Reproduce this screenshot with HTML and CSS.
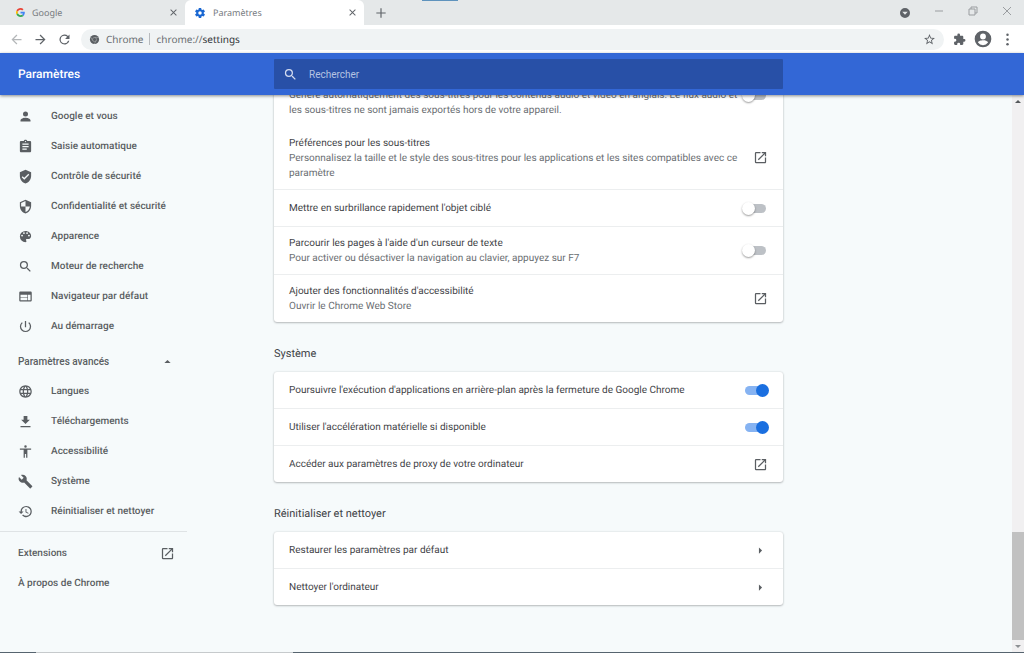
FILE: index.html
```html
<!DOCTYPE html>
<html lang="fr">
<head>
<meta charset="utf-8">
<title>Paramètres</title>
<link rel="stylesheet" href="styles.css">
</head>
<body>
<svg class="sprite" aria-hidden="true">
  <symbol id="i-open" viewBox="0 0 24 24"><path d="M19 19H5V5h7V3H5a2 2 0 0 0-2 2v14a2 2 0 0 0 2 2h14c1.1 0 2-.9 2-2v-7h-2v7zM14 3v2h3.590l-9.830 9.830 1.410 1.410L19 6.410V10h2V3h-7z"/></symbol>
  <symbol id="i-search" viewBox="0 0 24 24"><path d="M15.500 14h-.79l-.28-.27A6.470 6.470 0 0 0 16 9.500 6.500 6.500 0 1 0 9.500 16c1.610 0 3.090-.59 4.230-1.570l.27.28v.79l5 4.990L20.490 19l-4.990-5zm-6 0C7.010 14 5 11.990 5 9.500S7.010 5 9.500 5 14 7.010 14 9.500 11.990 14 9.500 14z"/></symbol>
  <symbol id="i-close" viewBox="0 0 24 24"><path d="M19 6.400L17.600 5 12 10.600 6.400 5 5 6.400 10.600 12 5 17.600 6.400 19 12 13.400 17.600 19 19 17.600 13.400 12z"/></symbol>
  <symbol id="i-back" viewBox="0 0 24 24"><path d="M20 11H7.830l5.590-5.590L12 4l-8 8 8 8 1.410-1.410L7.830 13H20v-2z"/></symbol>
  <symbol id="i-right" viewBox="0 0 24 24"><path d="M9.500 7l5 5-5 5z"/></symbol>
</svg>

<header class="tabs">
  <div class="tab">
    <svg class="favicon" viewBox="0 0 48 48"><path fill="#ea4335" d="M24 9.500c3.540 0 6.710 1.220 9.210 3.600l6.850-6.850C35.900 2.380 30.470 0 24 0 14.620 0 6.510 5.380 2.560 13.220l7.980 6.190C12.430 13.720 17.740 9.500 24 9.500z"/><path fill="#4285f4" d="M46.980 24.550c0-1.570-.15-3.090-.38-4.550H24v9.020h12.940c-.58 2.960-2.260 5.480-4.780 7.180l7.730 6c4.510-4.180 7.090-10.360 7.090-17.650z"/><path fill="#fbbc05" d="M10.530 28.590a14.500 14.500 0 0 1 0-9.180l-7.980-6.190a24 24 0 0 0 0 21.560l7.980-6.190z"/><path fill="#34a853" d="M24 48c6.480 0 11.930-2.130 15.890-5.810l-7.730-6c-2.150 1.450-4.920 2.300-8.160 2.300-6.260 0-11.570-4.220-13.470-9.910l-7.980 6.190C6.510 42.620 14.620 48 24 48z"/></svg>
    <span class="tab-name">Google</span>
    <button class="ico" aria-label="Fermer l'onglet Google"><svg><use href="#i-close"/></svg></button>
  </div>
  <div class="tab active">
    <svg class="gear" viewBox="0 0 24 24"><path d="M19.430 12.980c.04-.32.07-.64.07-.98s-.03-.66-.07-.98l2.110-1.650c.19-.15.24-.42.12-.64l-2-3.460c-.12-.22-.39-.3-.61-.22l-2.490 1c-.52-.4-1.080-.73-1.690-.98l-.38-2.650A.49.49 0 0 0 14 2h-4c-.25 0-.46.18-.49.42l-.38 2.650c-.61.25-1.170.59-1.690.98l-2.490-1c-.23-.09-.49 0-.61.22l-2 3.460c-.13.22-.07.49.12.64l2.110 1.650c-.04.32-.07.65-.07.98s.03.66.07.98l-2.110 1.650c-.19.15-.24.42-.12.64l2 3.460c.12.22.39.3.61.22l2.490-1c.52.4 1.080.73 1.690.98l.38 2.650c.03.24.24.42.49.42h4c.25 0 .46-.18.49-.42l.38-2.650c.61-.25 1.170-.59 1.690-.98l2.490 1c.23.09.49 0 .61-.22l2-3.460c.12-.22.07-.49-.12-.64l-2.110-1.650zM12 15.500a3.500 3.500 0 1 1 0-7 3.500 3.500 0 0 1 0 7z"/></svg>
    <span class="tab-name">Paramètres</span>
    <button class="ico" aria-label="Fermer l'onglet Paramètres"><svg><use href="#i-close"/></svg></button>
  </div>
  <button class="ico new-tab" aria-label="Nouvel onglet"><svg viewBox="0 0 24 24"><path d="M20 13h-7v7h-2v-7H4v-2h7V4h2v7h7z"/></svg></button>
  <div class="window-buttons">
    <button class="ico" aria-label="Rechercher des onglets"><svg viewBox="0 0 24 24"><path fill-rule="evenodd" d="M12 2a10 10 0 1 0 0 20 10 10 0 0 0 0-20zM6.500 9.500h11L12 15.500z"/></svg></button>
    <button class="ico thin" aria-label="Réduire"><svg viewBox="0 0 12 12"><path d="M2 6h8"/></svg></button>
    <button class="ico thin" aria-label="Restaurer"><svg viewBox="0 0 12 12"><path d="M2 4h6v6H2zM4 4V2h6v6H8"/></svg></button>
    <button class="ico thin" aria-label="Fermer"><svg viewBox="0 0 12 12"><path d="M2 2l8 8M10 2l-8 8"/></svg></button>
  </div>
</header>

<div class="toolbar">
  <button class="ico dim" aria-label="Retour"><svg><use href="#i-back"/></svg></button>
  <button class="ico forward" aria-label="Avancer"><svg><use href="#i-back"/></svg></button>
  <button class="ico" aria-label="Actualiser"><svg viewBox="0 0 24 24"><path d="M17.650 6.350A8 8 0 1 0 19.730 14h-2.080A6 6 0 1 1 12 6c1.660 0 3.140.69 4.220 1.780L13 11h7V4l-2.350 2.350z"/></svg></button>
  <div class="omnibox">
    <svg class="chrome-logo" viewBox="0 0 24 24"><circle cx="12" cy="12" r="10"/><circle class="ring" cx="12" cy="12" r="4.500"/><path class="ring" d="M12 7.500h9M8 14.200L3.600 6.600M16 14.200l-4.500 7.700"/></svg>
    <span>Chrome</span>
    <span class="divider"></span>
    <span class="url">chrome://<b>settings</b></span>
    <button class="ico" aria-label="Ajouter aux favoris"><svg viewBox="0 0 24 24"><path d="M22 9.240l-7.190-.62L12 2 9.190 8.630 2 9.240l5.460 4.730L5.820 21 12 17.270 18.180 21l-1.630-7.030L22 9.240zM12 15.400l-3.760 2.270 1-4.280-3.320-2.880 4.380-.38L12 6.100l1.710 4.040 4.380.38-3.320 2.880 1 4.280L12 15.400z"/></svg></button>
  </div>
  <div class="actions">
    <button class="ico puzzle" aria-label="Extensions"><svg viewBox="0 0 24 24"><path d="M20.500 11H19V7c0-1.100-.9-2-2-2h-4V3.500a2.500 2.500 0 0 0-5 0V5H4c-1.100 0-2 .9-2 2v3.800h1.500a2.700 2.700 0 0 1 0 5.400H2V20c0 1.100.9 2 2 2h3.800v-1.500a2.700 2.700 0 0 1 5.400 0V22H17c1.100 0 2-.9 2-2v-4h1.500a2.500 2.500 0 0 0 0-5z"/></svg></button>
    <button class="ico profile" aria-label="Profil"><svg viewBox="0 0 24 24"><path d="M12 2a10 10 0 1 0 0 20 10 10 0 0 0 0-20zm0 3.500a3.500 3.500 0 1 1 0 7 3.500 3.500 0 0 1 0-7zm0 14a7.500 7.500 0 0 1-6-3.200c0-1.800 4-2.800 6-2.800s6 1 6 2.800a7.500 7.500 0 0 1-6 3.200z"/></svg></button>
    <button class="ico" aria-label="Menu"><svg viewBox="0 0 24 24"><circle cx="12" cy="4.500" r="2"/><circle cx="12" cy="12" r="2"/><circle cx="12" cy="19.500" r="2"/></svg></button>
  </div>
</div>

<div class="app-bar">
  <h1>Paramètres</h1>
  <label class="search"><svg><use href="#i-search"/></svg><input type="search" placeholder="Rechercher" aria-label="Rechercher"></label>
</div>

<div class="page">
  <nav class="side">
    <a href="#"><svg viewBox="0 0 24 24"><path d="M12 12a4 4 0 1 0 0-8 4 4 0 0 0 0 8zm0 2c-2.670 0-8 1.340-8 4v2h16v-2c0-2.660-5.330-4-8-4z"/></svg>Google et vous</a>
    <a href="#"><svg viewBox="0 0 24 24"><path d="M19 3h-4.180C14.400 1.840 13.300 1 12 1s-2.400.84-2.820 2H5c-1.100 0-2 .9-2 2v14c0 1.100.9 2 2 2h14c1.100 0 2-.9 2-2V5c0-1.100-.9-2-2-2zm-7 0c.55 0 1 .45 1 1s-.45 1-1 1-1-.45-1-1 .45-1 1-1zm2 14H7v-2h7v2zm3-4H7v-2h10v2zm0-4H7V7h10v2z"/></svg>Saisie automatique</a>
    <a href="#"><svg viewBox="0 0 24 24"><path d="M12 1L3 5v6c0 5.550 3.840 10.740 9 12 5.160-1.260 9-6.450 9-12V5l-9-4zm-2 16l-4-4 1.410-1.410L10 14.170l6.590-6.590L18 9l-8 8z"/></svg>Contrôle de sécurité</a>
    <a href="#"><svg viewBox="0 0 24 24"><path d="M12 1L3 5v6c0 5.550 3.840 10.740 9 12 5.160-1.260 9-6.450 9-12V5l-9-4zm0 10.990h7c-.53 4.120-3.280 7.790-7 8.940V12H5V6.300l7-3.110v8.800z"/></svg>Confidentialité et sécurité</a>
    <a href="#"><svg viewBox="0 0 24 24"><path d="M12 3a9 9 0 0 0 0 18c.83 0 1.500-.67 1.500-1.500 0-.39-.15-.74-.39-1.010-.23-.26-.38-.61-.38-.99 0-.83.67-1.500 1.500-1.500H16c2.760 0 5-2.240 5-5 0-4.420-4.030-8-9-8zm-5.500 9a1.500 1.500 0 1 1 0-3 1.500 1.500 0 0 1 0 3zm3-4a1.500 1.500 0 1 1 0-3 1.500 1.500 0 0 1 0 3zm5 0a1.500 1.500 0 1 1 0-3 1.500 1.500 0 0 1 0 3zm3 4a1.500 1.500 0 1 1 0-3 1.500 1.500 0 0 1 0 3z"/></svg>Apparence</a>
    <a href="#"><svg><use href="#i-search"/></svg>Moteur de recherche</a>
    <a href="#"><svg viewBox="0 0 24 24"><path d="M20 4H4c-1.100 0-1.990.9-1.990 2L2 18c0 1.100.9 2 2 2h16c1.100 0 2-.9 2-2V6c0-1.100-.9-2-2-2zm-5 14H4v-4h11v4zm0-5H4V9h11v4zm5 5h-4V9h4v9z"/></svg>Navigateur par défaut</a>
    <a href="#"><svg viewBox="0 0 24 24"><path d="M13 3h-2v10h2V3zm4.830 2.170l-1.420 1.420A6.920 6.920 0 0 1 19 12a7 7 0 1 1-11.420-5.420L6.170 5.170A8.930 8.930 0 0 0 3 12a9 9 0 0 0 18 0c0-2.740-1.230-5.180-3.170-6.830z"/></svg>Au démarrage</a>
    <button class="advanced" aria-expanded="true">Paramètres avancés<svg viewBox="0 0 24 24"><path d="M7 14.500l5-5 5 5z"/></svg></button>
    <a href="#"><svg viewBox="0 0 24 24"><path d="M11.990 2C6.470 2 2 6.480 2 12s4.470 10 9.990 10C17.520 22 22 17.520 22 12S17.520 2 11.990 2zm6.930 6h-2.950a15.650 15.650 0 0 0-1.380-3.560A8.030 8.030 0 0 1 18.920 8zM12 4.040c.83 1.200 1.480 2.530 1.910 3.960h-3.820c.43-1.430 1.080-2.760 1.910-3.960zM4.260 14a8.200 8.200 0 0 1 0-4h3.380a16.500 16.500 0 0 0 0 4H4.260zm.82 2h2.950c.32 1.250.78 2.450 1.380 3.560A7.990 7.990 0 0 1 5.080 16zm2.950-8H5.080a7.990 7.990 0 0 1 4.330-3.560A15.650 15.650 0 0 0 8.030 8zM12 19.960A14 14 0 0 1 10.090 16h3.820A14 14 0 0 1 12 19.960zM14.340 14H9.660a14.700 14.700 0 0 1 0-4h4.680a14.700 14.700 0 0 1 0 4zm.25 5.560c.6-1.110 1.060-2.310 1.380-3.560h2.950a8.030 8.030 0 0 1-4.330 3.560zM16.360 14a16.500 16.500 0 0 0 0-4h3.380a8.200 8.200 0 0 1 0 4h-3.380z"/></svg>Langues</a>
    <a href="#"><svg viewBox="0 0 24 24"><path d="M19 9h-4V3H9v6H5l7 7 7-7zM4 19v2h16v-2H4z"/></svg>Téléchargements</a>
    <a href="#"><svg viewBox="0 0 24 24"><path d="M12 2a2 2 0 1 1 0 4 2 2 0 0 1 0-4zm9 7h-6v13h-2v-6h-2v6H9V9H3V7h18v2z"/></svg>Accessibilité</a>
    <a href="#"><svg viewBox="0 0 24 24"><path d="M22.700 19l-9.100-9.100c.9-2.300.4-5-1.500-6.900-2-2-5-2.400-7.400-1.300L9 6 6 9 1.600 4.700C.4 7.100.9 10.100 2.900 12.100c1.900 1.900 4.600 2.400 6.900 1.500l9.100 9.100c.4.4 1 .4 1.400 0l2.300-2.300c.5-.4.5-1.100.1-1.400z"/></svg>Système</a>
    <a href="#"><svg viewBox="0 0 24 24"><path d="M13 3a9 9 0 0 0-9 9H1l3.890 3.890.07.14L9 12H6a7 7 0 1 1 2.060 4.940l-1.420 1.420A9 9 0 1 0 13 3zm-1 5v5l4.280 2.540.72-1.210-3.500-2.080V8H12z"/></svg>Réinitialiser et nettoyer</a>
    <hr>
    <a class="extensions" href="#">Extensions<svg><use href="#i-open"/></svg></a>
    <a href="#">À propos de Chrome</a>
  </nav>

  <main class="content">
    <section class="card">
      <div class="row">
        <label class="text" for="t-captions">Sous-titres instantanés<small>Génère automatiquement des sous-titres pour les contenus audio et vidéo en anglais. Le flux audio et les sous-titres ne sont jamais exportés hors de votre appareil.</small></label>
        <input class="toggle" type="checkbox" id="t-captions">
      </div>
      <a class="row joined" href="#"><span class="text">Préférences pour les sous-titres<small>Personnalisez la taille et le style des sous-titres pour les applications et les sites compatibles avec ce paramètre</small></span><svg><use href="#i-open"/></svg></a>
      <div class="row"><label class="text" for="t-focus">Mettre en surbrillance rapidement l'objet ciblé</label><input class="toggle" type="checkbox" id="t-focus"></div>
      <div class="row"><label class="text" for="t-caret">Parcourir les pages à l'aide d'un curseur de texte<small>Pour activer ou désactiver la navigation au clavier, appuyez sur F7</small></label><input class="toggle" type="checkbox" id="t-caret"></div>
      <a class="row" href="#"><span class="text">Ajouter des fonctionnalités d'accessibilité<small>Ouvrir le Chrome Web Store</small></span><svg><use href="#i-open"/></svg></a>
    </section>

    <h2>Système</h2>
    <section class="card">
      <div class="row"><label class="text" for="t-background">Poursuivre l'exécution d'applications en arrière-plan après la fermeture de Google Chrome</label><input class="toggle" type="checkbox" id="t-background" checked></div>
      <div class="row"><label class="text" for="t-hardware">Utiliser l'accélération matérielle si disponible</label><input class="toggle" type="checkbox" id="t-hardware" checked></div>
      <a class="row" href="#"><span class="text">Accéder aux paramètres de proxy de votre ordinateur</span><svg><use href="#i-open"/></svg></a>
    </section>

    <h2>Réinitialiser et nettoyer</h2>
    <section class="card">
      <a class="row" href="#"><span class="text">Restaurer les paramètres par défaut</span><svg><use href="#i-right"/></svg></a>
      <a class="row" href="#"><span class="text">Nettoyer l'ordinateur</span><svg><use href="#i-right"/></svg></a>
    </section>
  </main>

  <div class="scrollbar" aria-hidden="true">
    <svg viewBox="0 0 12 12"><path d="M3 8l3-3 3 3z"/></svg>
    <div class="thumb"></div>
    <svg class="end" viewBox="0 0 12 12"><path d="M3 5l3 3 3-3z"/></svg>
  </div>
</div>
<div class="desktop-edge"></div>
</body>
</html>
```

FILE: styles.css
```css
* { box-sizing: border-box; }

body {
  margin: 0;
  height: 100vh;
  display: flex;
  flex-direction: column;
  overflow: hidden;
  background: #f6fafb;
  color: #3f4347;
  font: 10px/15px Roboto, sans-serif;
  text-rendering: geometricPrecision;
}

.sprite { display: none; }
svg { width: 15px; height: 15px; flex: none; fill: currentColor; }
a { color: inherit; text-decoration: none; }
button { font: inherit; color: inherit; }

.ico {
  display: flex;
  padding: 0;
  border: 0;
  background: none;
  color: #5f6368;
}

/* Tab strip */
.tabs {
  display: flex;
  align-items: center;
  height: 25px;
  background:
    linear-gradient(#5f93bd, #5f93bd) 422px 0 / 36px 1px no-repeat,
    #e5e8e9;
  color: #777b7f;
  font-family: "Noto Sans", sans-serif;
  font-size: 9px;
}
.tab {
  display: flex;
  align-items: center;
  gap: 7px;
  flex: 0 1 179px;
  height: 25px;
  padding: 0 6px 0 9px;
}
.tab:first-child { flex-basis: 185px; padding-left: 16px; }
.tab.active { background: #fff; border-radius: 6px 6px 0 0; }
.tab-name { flex: 1; }
.tab .ico svg { width: 11px; height: 11px; }
.tab .favicon { width: 9px; height: 9px; }
.tab .gear { width: 12px; height: 12px; fill: #1967d2; }
.new-tab { margin-left: 10px; }
.new-tab svg { width: 14px; height: 14px; }
.window-buttons { display: flex; align-items: center; gap: 22px; margin-left: auto; padding-right: 11px; }
.window-buttons svg { width: 12px; height: 12px; }
.window-buttons .thin { padding-bottom: 4px; }
.thin svg { fill: none; stroke: #9a9da0; stroke-width: 1; }

/* Address bar */
.toolbar {
  display: flex;
  align-items: center;
  gap: 9px;
  height: 28px;
  padding: 0 9px;
  background: #fff;
  font: 10px/15px "Noto Sans", sans-serif;
}
.toolbar .dim { color: #b4b7b9; }
.forward { transform: scaleX(-1); }
.actions { display: flex; align-items: center; gap: 7px; }
.puzzle svg { width: 13px; height: 13px; }
.profile svg { width: 20px; height: 20px; }
.omnibox {
  flex: 1;
  display: flex;
  align-items: center;
  gap: 6px;
  height: 21px;
  padding: 0 8px;
  border-radius: 11px;
  background: #f0f3f4;
  color: #6a6e72;
}
.omnibox .ico svg { width: 13px; height: 13px; }
.omnibox .chrome-logo { width: 11px; height: 11px; fill: #5a5e62; }
.chrome-logo .ring { fill: none; stroke: #b9bcbe; stroke-width: 1; }
.divider { width: 1px; height: 12px; background: #b7babd; }
.url { flex: 1; }
.url b { font-weight: 400; color: #303438; }

/* Settings header */
.app-bar {
  z-index: 1;
  display: flex;
  align-items: center;
  flex: none;
  height: 42px;
  background: #3367d6;
  box-shadow: 0 1px 3px rgba(0, 0, 0, .45);
  color: #fff;
}
h1 {
  flex: 0 0 274px;
  margin: 0;
  padding-left: 18px;
  font-size: 12px;
  font-weight: 500;
}
.search {
  flex: 0 1 509px;
  display: flex;
  align-items: center;
  gap: 11px;
  height: 30px;
  padding: 0 9px;
  border-radius: 1px;
  background: #2850a7;
  color: #d3dcf0;
}
.search input {
  flex: 1;
  min-width: 0;
  padding: 0;
  border: 0;
  outline: 0;
  background: none;
  color: inherit;
  font: inherit;
}
.search input::placeholder { color: #b5c3e2; }

.page { flex: 1; min-height: 0; display: flex; }

/* Side menu */
.side {
  flex: 0 0 187px;
  padding-top: 6px;
  color: #5a5e62;
  font-weight: 500;
}
.side a, .advanced {
  display: flex;
  align-items: center;
  gap: 18px;
  height: 30px;
  padding: 0 12px 0 18px;
}
.advanced {
  width: 100%;
  margin-top: 5px;
  border: 0;
  background: none;
  font-weight: 500;
}
.advanced, .side .extensions { justify-content: space-between; }
.side hr { margin: 5px 0 6px; border: 0; border-top: 1px solid #dfe3e5; }

/* Content column, scrolled to its end */
.content {
  flex: 1;
  display: flex;
  flex-direction: column;
  justify-content: flex-end;
  overflow: hidden;
  padding: 0 12px 47px 87px;
}
.content > * { width: 100%; max-width: 509px; flex: none; }
h2 {
  margin: 0;
  padding: 24px 0 11px;
  font-size: 11px;
  line-height: 15px;
  font-weight: 400;
}
.card {
  border-radius: 3px;
  background: #fff;
  box-shadow: 0 1px 2px rgba(60, 64, 67, .3), 0 0 2px rgba(60, 64, 67, .2);
}
.row {
  display: flex;
  align-items: center;
  gap: 6px;
  min-height: 36px;
  padding: 8px 15px;
}
.row + .row { border-top: 1px solid #eceeef; min-height: 37px; }
.row + .row.joined { border-top: 0; min-height: 63px; }
.text { flex: 1; padding-top: 1px; }
.text small { display: block; font-size: 10px; color: #6a6e72; }
.row svg { fill: #5a5e62; }

.toggle {
  appearance: none;
  position: relative;
  flex: none;
  width: 21px;
  height: 9px;
  margin: 0 2px 0 0;
  border-radius: 5px;
  background: #bdc1c6;
}
.toggle::before {
  content: "";
  position: absolute;
  top: -2px;
  left: -3px;
  width: 13px;
  height: 13px;
  border-radius: 50%;
  background: #fff;
  box-shadow: 0 1px 2px rgba(0, 0, 0, .4);
}
.toggle:checked { background: #86b3f2; }
.toggle:checked::before { left: 11px; background: #1a6fe0; box-shadow: none; }

/* Scroll bar */
.scrollbar {
  flex: 0 0 12px;
  display: flex;
  flex-direction: column;
  background: #f1f0f1;
  color: #55585b;
}
.scrollbar svg { width: 12px; height: 12px; }
.scrollbar .thumb { height: 108px; margin: auto 0 0; background: #c1c1c1; }
.scrollbar .end { color: #8d9093; }

.desktop-edge {
  flex: none;
  height: 1px;
  background: linear-gradient(90deg, #56646f 36px, #c6cacc 36px 293px, #56646f 293px);
}
```
